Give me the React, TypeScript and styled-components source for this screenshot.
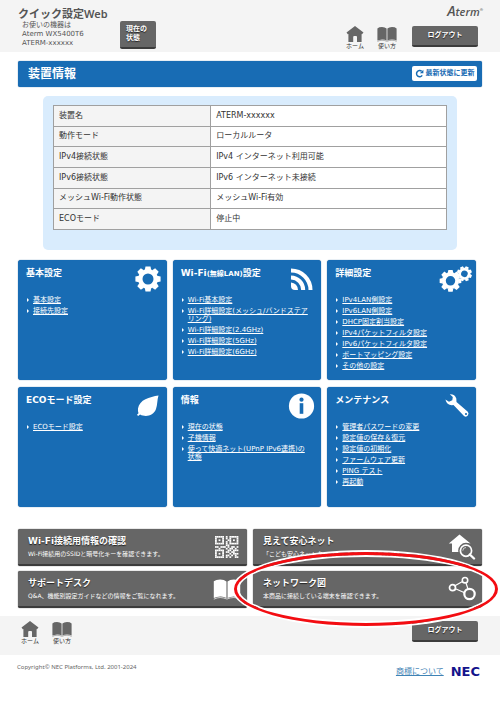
import React from "react";
import styled, { createGlobalStyle, css } from "styled-components";

const BLUE = "#186cb4";
const GREY = "#666666";

const GlobalStyle = createGlobalStyle`
  *, *::before, *::after { box-sizing: border-box; }
  html { -webkit-text-size-adjust: none; }
  body {
    margin: 0;
    background: #fff;
    color: #333;
    font-family: "DejaVu Sans", "Noto Sans CJK JP", sans-serif;
    font-size: 8px;
    line-height: 10px;
  }
  h1, h2, h3, p, ul { margin: 0; padding: 0; }
  button { font-family: inherit; margin: 0; cursor: pointer; }
  svg { display: block; flex: none; }
`;

const Header = styled.header`
  display: flex;
  justify-content: space-between;
  height: 52px;
  padding: 0 17px 0 18px;
  background: #f4f4f4;
`;

const Identity = styled.div`
  display: flex;
`;

const Product = styled.div`
  width: 102px;
  padding-top: 6px;
  color: #555;
`;

const SiteTitle = styled.h1`
  font-family: "Noto Sans", "Noto Sans CJK JP", sans-serif;
  font-size: 11px;
  line-height: 15px;
  font-weight: 600;
  white-space: nowrap;
`;

const Device = styled.p`
  padding-left: 4px;
  font-size: 7px;
  line-height: 9px;
  white-space: nowrap;
`;

const DarkButton = styled.button<{ $size: "status" | "logout" }>`
  border: 0;
  border-bottom: 2px solid #3c3c3c;
  border-radius: 2px;
  background: ${GREY};
  color: #fff;
  font-size: 7px;
  font-weight: 700;
  line-height: 9px;
  text-shadow: 0 1px 1px #222;
  ${(p) =>
    p.$size === "status"
      ? css`
          width: 36px;
          height: 28px;
          margin-top: 21px;
          padding: 0 6px;
          text-align: left;
        `
      : css`
          width: 66px;
          height: 21px;
          padding: 0;
          text-align: center;
        `}
`;

const HeaderSide = styled.div`
  display: flex;
  flex-direction: column;
  align-items: flex-end;
`;

const AtermLogo = styled.div`
  height: 26px;
  padding-top: 4px;
  color: #555;
  font-family: "Open Sans", "Noto Sans", sans-serif;
  font-size: 11px;
  font-style: italic;
  font-weight: 600;
  line-height: 14px;
`;

const LogoInitial = styled.span`
  font-size: 14px;
`;

const LogoMark = styled.sup`
  font-size: 4px;
  line-height: 4px;
`;

const HeaderTools = styled.div`
  display: flex;
  align-items: flex-start;
  padding-right: 5px;
`;

const IconLinks = styled.nav`
  display: flex;
  gap: 12px;
`;

const HeaderLinks = styled(IconLinks)`
  margin-right: 15px;
`;

const IconLink = styled.a`
  display: flex;
  flex-direction: column;
  align-items: center;
  width: 20px;
  color: ${GREY};
  font-size: 6px;
  line-height: 7px;
  text-decoration: none;
  white-space: nowrap;
`;

const IconLabel = styled.span`
  color: #333;
`;

const TitleBar = styled.div`
  display: flex;
  align-items: center;
  justify-content: space-between;
  height: 26px;
  margin: 9px 18px;
  padding: 0 5px 1px 10px;
  border-radius: 2px;
  background: ${BLUE};
  box-shadow: 0 0 1px #0f4f8a;
  color: #fff;
`;

const PageTitle = styled.h2`
  font-size: 12px;
  line-height: 16px;
`;

const Refresh = styled.button`
  display: flex;
  align-items: center;
  justify-content: center;
  gap: 2px;
  width: 65px;
  height: 15px;
  padding: 0;
  border: 0;
  border-radius: 2px;
  background: #fff;
  color: ${BLUE};
  font-size: 7px;
  font-weight: 700;
  line-height: 9px;
  white-space: nowrap;
`;

const StatusPanel = styled.section`
  margin: 0 43px;
  padding: 9px 10px 20px;
  border-radius: 5px;
  background: #d9ecfd;
`;

const StatusTable = styled.table`
  width: 100%;
  height: 125px;
  border-collapse: collapse;
  table-layout: fixed;
  background: #fff;
  color: #333;
  th, td {
    padding: 0 5px;
    border: 1px solid #a0a0a0;
    font-weight: 400;
    text-align: left;
  }
  th {
    width: 40%;
    background: #f4f4f4;
  }
`;

const Menu = styled.main`
  display: grid;
  grid-template-columns: repeat(3, 1fr);
  gap: 7px 6px;
  margin: 10px 24px 0 18px;
`;

const Card = styled.section`
  min-height: 120px;
  padding: 6px 4px 7px 8px;
  border-radius: 3px;
  background: ${BLUE};
  box-shadow: 0 0 1px #0f4f8a;
  color: #fff;
`;

const CardHead = styled.div`
  display: flex;
  align-items: flex-start;
  justify-content: space-between;
  height: 30px;
`;

const CardTitle = styled.h3`
  padding-top: 1px;
  font-size: 9px;
  line-height: 12px;
  white-space: nowrap;
`;

const Small = styled.span`
  font-size: 7px;
`;

const LinkList = styled.ul`
  display: grid;
  gap: 3px;
  padding-right: 7px;
  list-style: none;
`;

const LinkItem = styled.li`
  display: flex;
  font-size: 7px;
  line-height: 8px;
  &::before {
    content: "";
    width: 0;
    height: 0;
    flex: none;
    margin: 2px 4px 0 1px;
    border: 2px solid transparent;
    border-left: 2px solid #fff;
    border-right: 0;
  }
  a { color: #fff; text-underline-offset: 1px; }
`;

const Services = styled.section`
  display: grid;
  grid-template-columns: 1fr 1fr;
  gap: 5px 6px;
  margin: 22px 18px 0;
`;

const ServiceCell = styled.div`
  position: relative;
`;

const ServiceButton = styled.button`
  display: flex;
  align-items: center;
  justify-content: space-between;
  width: 100%;
  height: 37px;
  padding: 0 6px 0 10px;
  border: 0;
  border-bottom: 2px solid #3c3c3c;
  border-radius: 2px;
  background: ${GREY};
  box-shadow: 0 0 1px #222;
  color: #fff;
  text-align: left;
`;

const ServiceTitle = styled.span`
  display: block;
  font-size: 9px;
  font-weight: 700;
  line-height: 12px;
  text-shadow: 0 1px 1px #222;
`;

const ServiceNote = styled.span`
  display: block;
  padding-top: 2px;
  font-size: 6px;
  line-height: 9px;
  white-space: nowrap;
`;

const Callout = styled.span`
  position: absolute;
  inset: -19px -16px -18px -19px;
  border: 3px solid #f30d12;
  border-radius: 50%;
  box-shadow: 0 0 0 2px #fff, inset 0 0 0 2px #fff;
  pointer-events: none;
`;

const FooterBar = styled.div`
  display: flex;
  justify-content: space-between;
  align-items: flex-start;
  height: 39px;
  margin-top: 8px;
  padding: 5px 22px 0 20px;
  background: #f4f4f4;
`;

const Legal = styled.footer`
  display: flex;
  justify-content: space-between;
  padding: 8px 20px 20px 17px;
`;

const Copyright = styled.p`
  color: #666;
  font-family: "Noto Sans", sans-serif;
  font-size: 6px;
  line-height: 8px;
`;

const Brand = styled.div`
  display: flex;
  align-items: center;
  gap: 7px;
  padding-top: 2px;
  a { color: #3f83b5; line-height: 12px; }
`;

const NecLogo = styled.strong`
  color: #14148c;
  font-size: 13px;
  line-height: 14px;
`;

const HomeIcon = () => (
  <svg width="18" height="16" viewBox="0 0 18 16" fill="currentColor" aria-hidden="true">
    <path d="M9 0 17.5 6.5 16 8.2 15.6 7.9V16H11V10.8Q11 10 10 10H8.2Q7.2 10 7.2 11V16H2.4V7.9L1.8 8.2.5 6.5Z" />
  </svg>
);

const BookIcon = ({ w = 20, h = 16 }: { w?: number; h?: number }) => (
  <svg width={w} height={h} viewBox="0 0 20 16" fill="currentColor" aria-hidden="true">
    <path d="M.4 2.4Q2 1 5 1T9.6 2.6V14.6Q7.5 13.2 5 13.4T.4 14.6ZM10.4 2.6Q12 1 15 1T19.6 2.4V14.6Q17.6 13.4 15 13.4T10.4 14.6Z" />
    <path d="M.4 15.4Q3 14.2 5 14.2T10 15.3Q12.5 14.2 15 14.2T19.6 15.4" fill="none" stroke="currentColor" strokeWidth=".5" />
  </svg>
);

const RefreshIcon = () => (
  <svg width="9" height="9" viewBox="0 0 9 9" aria-hidden="true">
    <path d="M7.2 6.4A3.1 3.1 0 1 1 6.7 2.3" fill="none" stroke="currentColor" strokeWidth="1.5" />
    <path d="M8.4.8V4.2H4.9Z" fill="currentColor" />
  </svg>
);

const Gear = ({ x, y, s, turn = 0 }: { x: number; y: number; s: number; turn?: number }) => (
  <g transform={`translate(${x} ${y}) scale(${s}) rotate(${turn})`}>
    <circle r="7.7" fill="none" stroke="#fff" strokeWidth="4.4" />
    {[0, 45, 90, 135, 180, 225, 270, 315].map((a) => (
      <path key={a} d="M-3.2-9 -2.5-12.6H2.5L3.2-9Z" fill="#fff" transform={`rotate(${a})`} />
    ))}
  </g>
);

const GearIcon = () => (
  <svg width="29" height="26" viewBox="0 0 29 26" aria-hidden="true">
    <Gear x={14} y={13} s={1} />
  </svg>
);

const GearsIcon = () => (
  <svg width="33" height="26" viewBox="0 0 33 26" aria-hidden="true">
    <Gear x={11.5} y={14.8} s={0.86} />
    <Gear x={25.4} y={7.8} s={0.6} turn={22} />
  </svg>
);

const FeedIcon = () => (
  <svg width="27" height="26" viewBox="0 0 27 26" fill="none" stroke="#fff" aria-hidden="true">
    <path d="M1 4.500A19.500 19.500 0 0 1 20.500 24M1 11.500A12.500 12.500 0 0 1 13.200 24" strokeWidth="4" />
    <path d="M1 16.500A7.500 7.500 0 0 1 8 24H5Q1 24 1 20Z" fill="#fff" stroke="none" />
  </svg>
);

const LeafIcon = () => (
  <svg width="27" height="26" viewBox="0 0 27 26" fill="#fff" aria-hidden="true">
    <path d="M22.500 2.500C13.500 4 3.500 6.500 2 15.500Q1.700 18 2.500 20.200L1 21.800 2.100 22.900 4.100 21.500C9.500 24.500 17.500 23 20 16 21.500 11.500 21 7.500 22.500 2.500Z" />
  </svg>
);

const InfoIcon = () => (
  <svg width="29" height="26" viewBox="0 0 29 26" aria-hidden="true">
    <circle cx="13.500" cy="13" r="12.600" fill="#fff" />
    <circle cx="13.500" cy="6.700" r="2.100" fill={BLUE} />
    <path d="M11.700 10.200H15.300V20.800H11.700Z" fill={BLUE} />
  </svg>
);

const WrenchIcon = () => (
  <svg width="27" height="26" viewBox="0 0 27 26" aria-hidden="true">
    <path
      fill="#fff"
      fillRule="evenodd"
      d="M4.800 1.200Q10 1 11.300 5.500L11.500 9 22.800 18.800Q24.300 20.500 22.800 22.500T19 23L8.500 12Q2 13 .4 6.500L4 8.700 7.300 7.300 7.800 4ZM21 19.900A1.100 1.100 0 1 0 21 22.100 1.100 1.100 0 1 0 21 19.900Z"
    />
  </svg>
);

const QR = [
  "1111101011111",
  "1000101010001",
  "1010100110101",
  "1000101010001",
  "1111101011111",
  "0000001100000",
  "1101110101101",
  "0010001011010",
  "1111100110111",
  "1000101101100",
  "1010100010111",
  "1000101101010",
  "1111101010011",
];

const QrIcon = () => (
  <svg width="26" height="22" viewBox="0 0 26 22" fill="#fff" aria-hidden="true">
    <g transform="scale(1.8 1.69)">
      {QR.flatMap((row, y) =>
        row.split("").map((c, x) => (c === "1" ? <rect key={`${x}-${y}`} x={x} y={y} width="1" height="1" /> : null)),
      )}
    </g>
  </svg>
);

const HouseSearchIcon = () => (
  <svg width="28" height="26" viewBox="0 0 28 26" aria-hidden="true">
    <path d="M11.500.500 22.500 9.500H19.500V18H4V9.500H.8Z" fill="#fff" />
    <circle cx="18" cy="16.700" r="5.600" fill={GREY} stroke={GREY} strokeWidth="4.500" />
    <circle cx="18" cy="16.700" r="5.600" fill="none" stroke="#fff" strokeWidth="1.700" />
    <path d="M14.800 16.700A3.200 3.200 0 0 1 18 13.500" fill="none" stroke="#fff" strokeWidth=".7" />
    <path d="M21.800 20.500 26 24.500" stroke="#fff" strokeWidth="2.400" strokeLinecap="round" />
  </svg>
);

const NetworkIcon = () => (
  <svg width="28" height="26" viewBox="0 0 28 26" fill="none" stroke="#fff" aria-hidden="true">
    <path d="M6.500 10 14.500 5.500M7.500 12.800 16 16.500M18 7 20 13" strokeWidth="1.200" />
    <circle cx="4.500" cy="11.700" r="3" strokeWidth="1.700" />
    <circle cx="17" cy="4.200" r="2.700" strokeWidth="1.600" />
    <circle cx="21.500" cy="18" r="5.200" strokeWidth="2.200" />
  </svg>
);

const STATUS = [
  ["装置名", "ATERM-xxxxxx"],
  ["動作モード", "ローカルルータ"],
  ["IPv4接続状態", "IPv4 インターネット利用可能"],
  ["IPv6接続状態", "IPv6 インターネット未接続"],
  ["メッシュWi-Fi動作状態", "メッシュWi-Fi有効"],
  ["ECOモード", "停止中"],
];

const CARDS: { title: React.ReactNode; icon: React.ReactNode; links: string[] }[] = [
  { title: "基本設定", icon: <GearIcon />, links: ["基本設定", "接続先設定"] },
  {
    title: <>Wi-Fi<Small>(無線LAN)</Small>設定</>,
    icon: <FeedIcon />,
    links: [
      "Wi-Fi基本設定",
      "Wi-Fi詳細設定(メッシュ/バンドステアリング)",
      "Wi-Fi詳細設定(2.4GHz)",
      "Wi-Fi詳細設定(5GHz)",
      "Wi-Fi詳細設定(6GHz)",
    ],
  },
  {
    title: "詳細設定",
    icon: <GearsIcon />,
    links: [
      "IPv4LAN側設定",
      "IPv6LAN側設定",
      "DHCP固定割当設定",
      "IPv4パケットフィルタ設定",
      "IPv6パケットフィルタ設定",
      "ポートマッピング設定",
      "その他の設定",
    ],
  },
  { title: "ECOモード設定", icon: <LeafIcon />, links: ["ECOモード設定"] },
  {
    title: "情報",
    icon: <InfoIcon />,
    links: ["現在の状態", "子機情報", "使って快適ネット(UPnP IPv6連携)の状態"],
  },
  {
    title: "メンテナンス",
    icon: <WrenchIcon />,
    links: ["管理者パスワードの変更", "設定値の保存＆復元", "設定値の初期化", "ファームウェア更新", "PING テスト", "再起動"],
  },
];

const SERVICES = [
  { title: "Wi-Fi接続用情報の確認", note: "Wi-Fi接続用のSSIDと暗号化キーを確認できます。", icon: <QrIcon /> },
  { title: "見えて安心ネット", note: "「こども安心ネットタイマー」をご利用になれます。", icon: <HouseSearchIcon /> },
  { title: "サポートデスク", note: "Q&A、機能別設定ガイドなどの情報をご覧になれます。", icon: <BookIcon w={28} h={22} /> },
  { title: "ネットワーク図", note: "本商品に接続している端末を確認できます。", icon: <NetworkIcon />, marked: true },
];

const ShortcutItems = () => (
  <>
    <IconLink href="#home">
      <HomeIcon />
      <IconLabel>ホーム</IconLabel>
    </IconLink>
    <IconLink href="#guide">
      <BookIcon />
      <IconLabel>使い方</IconLabel>
    </IconLink>
  </>
);

export default function App() {
  return (
    <div lang="ja">
      <GlobalStyle />
      <Header>
        <Identity>
          <Product>
            <SiteTitle>クイック設定Web</SiteTitle>
            <Device>お使いの機器は</Device>
            <Device>Aterm WX5400T6</Device>
            <Device>ATERM-xxxxxx</Device>
          </Product>
          <DarkButton $size="status">
            現在の
            <br />
            状態
          </DarkButton>
        </Identity>
        <HeaderSide>
          <AtermLogo>
            <LogoInitial>A</LogoInitial>term<LogoMark>®</LogoMark>
          </AtermLogo>
          <HeaderTools>
            <HeaderLinks>
              <ShortcutItems />
            </HeaderLinks>
            <DarkButton $size="logout">ログアウト</DarkButton>
          </HeaderTools>
        </HeaderSide>
      </Header>

      <TitleBar>
        <PageTitle>装置情報</PageTitle>
        <Refresh>
          <RefreshIcon />
          最新状態に更新
        </Refresh>
      </TitleBar>

      <StatusPanel>
        <StatusTable>
          <tbody>
            {STATUS.map(([name, value]) => (
              <tr key={name}>
                <th scope="row">{name}</th>
                <td>{value}</td>
              </tr>
            ))}
          </tbody>
        </StatusTable>
      </StatusPanel>

      <Menu>
        {CARDS.map((card, i) => (
          <Card key={i}>
            <CardHead>
              <CardTitle>{card.title}</CardTitle>
              {card.icon}
            </CardHead>
            <LinkList>
              {card.links.map((label) => (
                <LinkItem key={label}>
                  <a href="#settings">{label}</a>
                </LinkItem>
              ))}
            </LinkList>
          </Card>
        ))}
      </Menu>

      <Services>
        {SERVICES.map((s) => (
          <ServiceCell key={s.title}>
            <ServiceButton>
              <span>
                <ServiceTitle>{s.title}</ServiceTitle>
                <ServiceNote>{s.note}</ServiceNote>
              </span>
              {s.icon}
            </ServiceButton>
            {s.marked && <Callout />}
          </ServiceCell>
        ))}
      </Services>

      <FooterBar>
        <IconLinks>
          <ShortcutItems />
        </IconLinks>
        <DarkButton $size="logout">ログアウト</DarkButton>
      </FooterBar>

      <Legal>
        <Copyright>Copyright© NEC Platforms, Ltd. 2001-2024</Copyright>
        <Brand>
          <a href="#trademarks">商標について</a>
          <NecLogo>NEC</NecLogo>
        </Brand>
      </Legal>
    </div>
  );
}
